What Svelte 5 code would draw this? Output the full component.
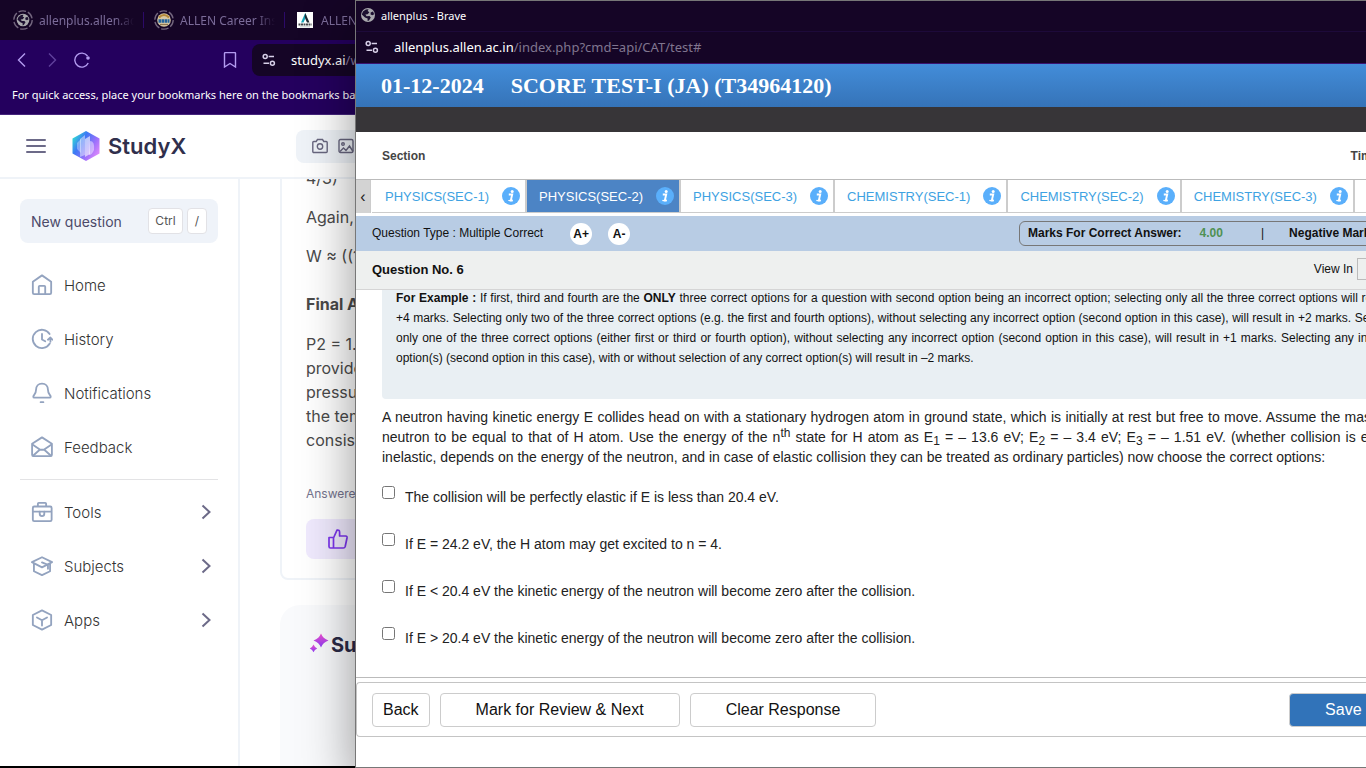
<script lang="ts">
  const browserTabs = [
    { icon: 'globe', title: 'allenplus.allen.ac.in' },
    { icon: 'seal', title: 'ALLEN Career Institute' },
    { icon: 'allen', title: 'ALLEN Digital' }
  ];

  const mainNav = [
    { icon: 'home', label: 'Home' },
    { icon: 'history', label: 'History' },
    { icon: 'bell', label: 'Notifications' },
    { icon: 'mail', label: 'Feedback' }
  ];

  const moreNav = [
    { icon: 'tools', label: 'Tools' },
    { icon: 'subjects', label: 'Subjects' },
    { icon: 'apps', label: 'Apps' }
  ];

  const sections = [
    'PHYSICS(SEC-1)',
    'PHYSICS(SEC-2)',
    'PHYSICS(SEC-3)',
    'CHEMISTRY(SEC-1)',
    'CHEMISTRY(SEC-2)',
    'CHEMISTRY(SEC-3)',
    'MATHS(SEC-1)'
  ];

  const options = [
    'The collision will be perfectly elastic if E is less than 20.4 eV.',
    'If E = 24.2 eV, the H atom may get excited to n = 4.',
    'If E < 20.4 eV the kinetic energy of the neutron will become zero after the collision.',
    'If E > 20.4 eV the kinetic energy of the neutron will become zero after the collision.'
  ];

  let activeSection = $state('PHYSICS(SEC-2)');
  let checked = $state([false, false, false, false]);

  function clearResponse() {
    checked = options.map(() => false);
  }
</script>

{#snippet globe()}
  <circle cx="8" cy="8" r="7" fill="#a9a9ad" />
  <path d="M3 4.6 5.8 2.4 8.6 2.2 7.6 4 9.4 5.2 7.6 7.2 5.4 7.4 6.6 9.2 9.6 9 10.8 10.6 9 13.4 7.6 14 7.6 11.6 5 10.4 1.8 7.4Z" fill="#1c1030" />
  <path d="M10.6 5.6 13 4.4 14.2 7.2 12.4 8.2 10.6 7.4Z" fill="#1c1030" />
{/snippet}

{#snippet tuneIcon()}
  <svg class="tune" viewBox="0 0 14 14" fill="none" stroke="currentColor" stroke-width="1.5">
    <circle cx="3.2" cy="3.6" r="2" />
    <path d="M6.6 3.6H12M1.5 10.2H7" />
    <circle cx="10.4" cy="10.2" r="2" />
  </svg>
{/snippet}

{#snippet navIcon(name: string)}
  <svg class="nav-icon" viewBox="0 0 24 24" fill="none" stroke="currentColor" stroke-width="2" stroke-linejoin="round" stroke-linecap="round">
    {#if name === 'home'}
      <path d="M2 8.500 12 1.500l10 7V20.500a1.500 1.500 0 0 1-1.500 1.500h-17a1.500 1.500 0 0 1-1.500-1.500Z" />
      <path d="M8.500 22v-8a1 1 0 0 1 1-1h5a1 1 0 0 1 1 1v8" />
    {:else if name === 'history'}
      <path d="M20.300 6.500A10 10 0 1 0 20.500 17" />
      <path d="M12 6.500V12.500L15.500 14.500" />
      <path d="M18.500 12.800 21.200 10.400 23.500 12.800M21.200 10.800V15" />
    {:else if name === 'bell'}
      <path d="M12 1.800c-4 0-6.500 3-6.500 6.700 0 5-3 5.500-3 7.500 0 .8.600 1 1.200 1h16.600c.6 0 1.200-.2 1.200-1 0-2-3-2.500-3-7.500 0-3.700-2.500-6.700-6.500-6.700ZM10.500 22h3" />
    {:else if name === 'mail'}
      <path d="M1.200 8.500 12 1.500 22.800 8.500v12a1.500 1.500 0 0 1-1.500 1.500H2.700a1.500 1.500 0 0 1-1.500-1.500Z" />
      <path d="M2 9.500 10 15h4l8-5.500M2.200 21.500 9.500 15M21.800 21.500 14.500 15" />
    {:else if name === 'tools'}
      <path d="M3.500 6h17.500a1.500 1.500 0 0 1 1.500 1.500v13a1.500 1.500 0 0 1-1.500 1.500h-17.500A1.500 1.500 0 0 1 2 20.500v-13A1.500 1.500 0 0 1 3.500 6ZM7.500 5.500V3a1 1 0 0 1 1-1h7a1 1 0 0 1 1 1v2.500M2 11.500h20" />
      <path d="M9.500 11.500v2.500a2.500 2.500 0 0 0 5 0v-2.500" />
    {:else if name === 'subjects'}
      <path d="M1 7.800 12 2.500l11 5.300L12 13.500ZM3.200 9.500v8.200L12 22l8.800-4.300V9.500M12 8l6.500 2.800V15" />
    {:else}
      <path d="M12 1.500 22 6.500v11L12 22.500 2 17.500v-11ZM6.500 9.200 12 12.200l5.500-3M12 12.200V18" />
    {/if}
  </svg>
{/snippet}

<div class="desktop">
  <div class="browser">
    <div class="tab-strip">
      {#each browserTabs as tab}
        <div class="browser-tab">
          {#if tab.icon === 'allen'}
            <svg class="site-icon" viewBox="0 0 16 16">
              <rect width="16" height="16" fill="#fff" />
              <path d="M8.200 1 4 10.500H6.500L9.500 4Z" fill="#18a5ba" />
              <path d="M8.200 1 12.500 10.500H10L7.600 5Z" fill="#202a33" />
              <path d="M1.500 12.500h13" stroke="#44484c" stroke-width="2" stroke-dasharray="2 .5" />
              <path d="M3 14.800h10" stroke="#b6bec3" stroke-width=".8" />
            </svg>
          {:else}
            <svg class="ring-icon" viewBox="0 0 20 20">
              <circle cx="10" cy="10" r="9.200" fill="none" stroke="#74677f" stroke-width="1.300" stroke-dasharray="7.600 2.030" />
              {#if tab.icon === 'globe'}
                <g transform="translate(2.800 2.800) scale(.9)">{@render globe()}</g>
              {:else}
                <circle cx="10" cy="10" r="6.800" fill="#d7c9a4" />
                <path d="M5 7.500Q10 2.500 15 7.500" fill="none" stroke="#b58a39" stroke-width="2" />
                <path d="M4.500 11h11" stroke="#22639d" stroke-width="3.500" stroke-dasharray="2.500 .5" />
                <path d="M6 14.500h8" stroke="#8e7650" stroke-width="1.200" />
              {/if}
            </svg>
          {/if}
          <span class="tab-title">{tab.title}</span>
        </div>
      {/each}
    </div>

    <div class="toolbar">
      <button class="tool" aria-label="Back">
        <svg viewBox="0 0 16 16"><path d="M11 1.500 4.500 8l6.500 6.500" /></svg>
      </button>
      <button class="tool dim" aria-label="Forward">
        <svg viewBox="0 0 16 16"><path d="M5 1.500 11.500 8 5 14.500" /></svg>
      </button>
      <button class="tool" aria-label="Reload">
        <svg viewBox="0 0 16 16"><path d="M13.500 4A7 7 0 1 0 14.200 11" /><circle class="dot" cx="14" cy="6" r="1.800" /></svg>
      </button>
      <button class="tool bookmark" aria-label="Bookmark">
        <svg viewBox="0 0 16 16"><path d="M2.500 1.500a1 1 0 0 1 1-1h9a1 1 0 0 1 1 1V15L8 11.500 2.500 15Z" /></svg>
      </button>
      <div class="address">
        {@render tuneIcon()}
        <span><b>studyx.ai</b>/webapp</span>
      </div>
    </div>
    <div class="bookmarks">For quick access, place your bookmarks here on the bookmarks bar.</div>

    <div class="studyx">
      <header class="site-header">
        <button class="menu" aria-label="Menu"><i></i><i></i><i></i></button>
        <div class="logo">
          <svg viewBox="0 0 28 30">
            <defs>
              <linearGradient id="hex" x1="0" y1=".1" x2="1" y2=".8">
                <stop offset="0" stop-color="#2ff0cd" />
                <stop offset=".35" stop-color="#3d78f5" />
                <stop offset=".7" stop-color="#a071fb" />
                <stop offset="1" stop-color="#e58cfb" />
              </linearGradient>
            </defs>
            <path d="M14 0 27.500 7.500v15L14 30 .5 22.500v-15Z" fill="url(#hex)" />
            <path d="M5 12 9 8v14l-4-4Z" fill="#fff" opacity=".35" />
            <path d="M8 8 13 4v20l-5 2Z" fill="#fff" opacity=".45" />
            <path d="M13 8 18 5v18l-5 3Z" fill="#fff" opacity=".6" />
            <path d="M18 10q5 0 4 9-2 5-5 5Z" fill="#fff" opacity=".45" />
          </svg>
          <span>StudyX</span>
        </div>
        <div class="search">
          <svg viewBox="0 0 16 16"><path d="M1.800 3.500h2.400L5.500 1.500h5l1.300 2h2.400a1 1 0 0 1 1 1v9a1 1 0 0 1-1 1H1.800a1 1 0 0 1-1-1v-9a1 1 0 0 1 1-1Z" /><circle cx="8" cy="8.500" r="2.700" /></svg>
          <svg viewBox="0 0 16 16"><rect x="1" y="1.500" width="14" height="13" rx="1.500" /><circle cx="5" cy="6" r="1.300" /><path d="m2 13.500 3.500-3.500 2.500 2.500 3.500-4.500 3.500 5.500" /></svg>
        </div>
      </header>

      <div class="site-body">
        <aside class="sidebar">
          <button class="new-question">
            <span>New question</span>
            <kbd>Ctrl</kbd>
            <kbd>/</kbd>
          </button>
          <nav>
            {#each mainNav as item}
              <a href="#top">{@render navIcon(item.icon)}{item.label}</a>
            {/each}
            <hr />
            {#each moreNav as item}
              <a href="#top">
                {@render navIcon(item.icon)}{item.label}
                <svg class="chevron" viewBox="0 0 10 16"><path d="M1.500 1.500 8.500 8l-7 6.500" /></svg>
              </a>
            {/each}
          </nav>
        </aside>

        <main class="feed">
          <article class="answer">
            <p>4/3)</p>
            <p>Again, using</p>
            <p>W ≈ ((1.2</p>
            <h4>Final Answer:</h4>
            <p class="last">
              P2 = 1.2 atm<br />
              provided<br />
              pressure<br />
              the temperature<br />
              consistent
            </p>
            <small>Answered by</small>
            <button class="like" aria-label="Like">
              <svg viewBox="0 0 20 20"><path d="M1 8.500h4.500V19H2.500A1.500 1.500 0 0 1 1 17.500ZM5.500 9 9 1.200q2.600-.6 2.600 2.300V7h6q1.700.2 1.400 2l-1.800 8.500q-.4 1.500-1.800 1.500H5.500" /></svg>
            </button>
          </article>
          <section class="suggested">
            <svg viewBox="0 0 20 20">
              <defs>
                <linearGradient id="spark" x1="0" y1="0" x2="0" y2="1">
                  <stop offset="0" stop-color="#f04fd0" />
                  <stop offset="1" stop-color="#8b3cf7" />
                </linearGradient>
              </defs>
              <path d="M12 .5q1.800 4.800 7.500 7-5.700 2.200-7.500 7-1.800-4.800-7.500-7 5.700-2.200 7.500-7Z" fill="url(#spark)" />
              <path d="M4.500 11.500q1 2.700 3.700 3.900-2.700 1.200-3.700 3.900-1-2.700-3.700-3.900 2.700-1.200 3.700-3.900Z" fill="url(#spark)" />
            </svg>
            <h3>Suggested</h3>
          </section>
        </main>
      </div>
    </div>
  </div>

  <div class="popup">
    <div class="popup-title">
      <svg viewBox="0 0 16 16">{@render globe()}</svg>
      allenplus - Brave
    </div>
    <div class="popup-url">
      {@render tuneIcon()}
      <span><b>allenplus.allen.ac.in</b>/index.php?cmd=api/CAT/test#</span>
    </div>
    <h1 class="test-name"><span>01-12-2024</span><span>SCORE TEST-I (JA) (T34964120)</span></h1>
    <div class="dark-bar"></div>
    <div class="section-row">
      <span>Section</span>
      <span class="time">Time Left :</span>
    </div>

    <div class="section-tabs">
      <button class="scroll-left" aria-label="Scroll left">‹</button>
      {#each sections as section}
        <button class="section-tab" class:active={section === activeSection} onclick={() => (activeSection = section)}>
          {section}
          <svg viewBox="0 0 18 18">
            <circle cx="9" cy="9" r="9" fill="#5aaffb" />
            <circle cx="10.200" cy="4.600" r="1.500" fill="#fff" />
            <path d="M6.800 7.500h3.400L8.800 13.500h1.800" fill="none" stroke="#fff" stroke-width="1.900" />
            <path d="M6.300 13.500h4.500" stroke="#fff" stroke-width="1.200" />
          </svg>
        </button>
      {/each}
    </div>

    <div class="type-bar">
      <span>Question Type : Multiple Correct</span>
      <button class="zoom">A+</button>
      <button class="zoom">A-</button>
      <div class="marks">
        <b>Marks For Correct Answer:</b>
        <b class="plus">4.00</b>
        <span class="bar">|</span>
        <b>Negative Marks: 2.00</b>
      </div>
    </div>

    <div class="number-bar">
      <b>Question No. 6</b>
      <label for="language">View In</label>
      <select id="language"><option></option><option>English</option></select>
    </div>

    <div class="question">
      <div class="instructions">
        <b>For Example :</b> If first, third and fourth are the <b>ONLY</b> three correct options for a question with second option being an incorrect option; selecting only all the three correct options will result in +4&nbsp;marks. Selecting only two of the three correct options (e.g. the first and fourth options), without selecting any incorrect option (second option in this case), will result in +2 marks. Selecting only one of the three correct options (either first or third or fourth option), without selecting any incorrect option (second option in this case), will result in +1 marks. Selecting any incorrect option(s) (second option in this case), with or without selection of any correct option(s) will result in –2 marks.
      </div>
      <p class="statement">
        A neutron having kinetic energy E collides head on with a stationary hydrogen atom in ground state, which is initially at rest but free to move. Assume the mass of the neutron to be equal to that of H atom. Use the energy of the n<sup>th</sup> state for H atom as E<sub>1</sub> = – 13.6 eV; E<sub>2</sub> = – 3.4 eV; E<sub>3</sub> = – 1.51 eV. (whether collision is elastic or inelastic, depends on the energy of the neutron, and in case of elastic collision they can be treated as ordinary particles) now choose the correct options:
      </p>
      {#each options as option, i}
        <label class="option">
          <input type="checkbox" bind:checked={checked[i]} />
          <span>{option}</span>
        </label>
      {/each}
    </div>

    <footer class="actions">
      <button>Back</button>
      <button class="wide">Mark for Review &amp; Next</button>
      <button class="wide clear" onclick={clearResponse}>Clear Response</button>
      <button class="wide save">Save &amp; Next</button>
    </footer>
  </div>
</div>

<style>
  :global(body) {
    background: #000;
  }

  .desktop {
    position: relative;
    height: 100vh;
    overflow: hidden;
    font-family: Inter, sans-serif;
  }

  .desktop * {
    box-sizing: border-box;
  }

  button {
    font: inherit;
    color: inherit;
    padding: 0;
    border: 0;
    background: none;
    cursor: pointer;
  }

  /* main browser window */
  .browser {
    display: flex;
    flex-direction: column;
    height: calc(100vh - 2px);
    overflow: hidden;
    white-space: nowrap;
  }

  .tab-strip {
    flex: none;
    display: flex;
    height: 40px;
    padding-left: 3px;
    background: #150526;
  }

  .browser-tab {
    position: relative;
    display: flex;
    align-items: center;
    gap: 6px;
    width: 141px;
    padding: 0 10px;
    color: #7b6c99;
    font-family: 'Noto Sans', sans-serif;
    font-size: 12px;
  }

  .browser-tab::after {
    content: '';
    position: absolute;
    right: 0;
    height: 16px;
    border-right: 1px solid #2c0a68;
  }

  .ring-icon {
    flex: none;
    width: 20px;
    height: 20px;
  }

  .site-icon {
    flex: none;
    width: 16px;
    height: 16px;
    margin: 0 2px;
  }

  .tab-title {
    overflow: hidden;
    mask-image: linear-gradient(90deg, #000 80%, transparent);
  }

  .toolbar {
    flex: none;
    display: flex;
    align-items: center;
    gap: 14px;
    height: 40px;
    padding-left: 14px;
    background: #24005e;
  }

  .tool {
    width: 16px;
    height: 16px;
    color: #b39bf0;
  }

  .tool svg {
    display: block;
    width: 16px;
    height: 16px;
    fill: none;
    stroke: currentColor;
    stroke-width: 1.4;
  }

  .tool .dot {
    fill: currentColor;
    stroke: none;
  }

  .tool.dim {
    color: #60409c;
  }

  .bookmark {
    margin-left: 118px;
  }

  .address {
    flex: 1;
    display: flex;
    align-items: center;
    gap: 15px;
    height: 32px;
    padding-left: 10px;
    border-radius: 8px;
    background: #150526;
    color: #8779a0;
    font-family: 'Noto Sans', sans-serif;
    font-size: 13px;
  }

  .tune {
    width: 14px;
    height: 14px;
    color: #d8d0e8;
  }

  .address b,
  .popup-url b {
    color: #fff;
    font-weight: 400;
  }

  .bookmarks {
    flex: none;
    height: 35px;
    padding-left: 12px;
    border-bottom: 1px solid #45257c;
    background: #24005e;
    color: #fff;
    font-family: 'Noto Sans', sans-serif;
    font-size: 11px;
    line-height: 30px;
  }

  .studyx {
    flex: 1;
    display: flex;
    flex-direction: column;
    min-height: 0;
    background: #fff;
  }

  .site-header {
    flex: none;
    display: flex;
    align-items: center;
    height: 64px;
    padding-left: 26px;
    border-bottom: 2px solid #eff3f8;
  }

  .menu {
    display: flex;
    flex-direction: column;
    gap: 4px;
    width: 20px;
  }

  .menu i {
    height: 2px;
    border-radius: 1px;
    background: #6c6a88;
  }

  .logo {
    display: flex;
    align-items: center;
    gap: 8px;
    width: 224px;
    margin-left: 26px;
    color: #302f4c;
    font-size: 22px;
    font-weight: 600;
  }

  .logo svg {
    width: 28px;
    height: 30px;
  }

  .search {
    flex: 1;
    display: flex;
    align-items: center;
    gap: 10px;
    height: 33px;
    padding-left: 16px;
    border-radius: 8px;
    background: #eff3f8;
  }

  .search svg {
    width: 16px;
    height: 16px;
    fill: none;
    stroke: #68667f;
    stroke-width: 1.4;
  }

  .site-body {
    flex: 1;
    display: flex;
    min-height: 0;
    overflow: hidden;
  }

  .sidebar {
    flex: none;
    width: 240px;
    padding: 20px 20px 0;
    border-right: 2px solid #eff3f8;
  }

  .new-question {
    display: flex;
    align-items: center;
    gap: 4px;
    width: 100%;
    height: 44px;
    padding: 0 11px;
    border-radius: 8px;
    background: #eff3f9;
    color: #4c4a69;
    font-size: 14px;
  }

  .new-question span {
    flex: 1;
    text-align: left;
  }

  kbd {
    height: 26px;
    padding: 0 6px;
    border: 1px solid #e2e2e6;
    border-radius: 4px;
    background: #fff;
    color: #555;
    font-family: inherit;
    font-size: 12px;
    line-height: 24px;
  }

  kbd:last-child {
    padding: 0 7px;
  }

  nav {
    margin-top: 15px;
  }

  nav a {
    display: flex;
    align-items: center;
    gap: 11px;
    height: 54px;
    padding: 0 7px 0 11px;
    color: #333;
    font-size: 15px;
    font-weight: 300;
    text-decoration: none;
  }

  .nav-icon {
    width: 22px;
    height: 22px;
    color: #93a3bf;
  }

  .chevron {
    width: 10px;
    height: 16px;
    margin-left: auto;
    fill: none;
    stroke: #6c6a88;
    stroke-width: 2;
  }

  hr {
    height: 1px;
    margin: 5px 0;
    border: 0;
    background: #e3e3e5;
  }

  .feed {
    flex: 1;
    display: flex;
    flex-direction: column;
    gap: 25px;
    padding: 0 40px;
    overflow: hidden;
    color: #4a4a4a;
    font-size: 16px;
    line-height: 24px;
  }

  /* the feed is scrolled part way through the answer */
  .answer {
    margin-top: -40px;
    padding: 25px 24px 19px;
    border: 2px solid #eff3f8;
    border-radius: 8px;
  }

  .answer p {
    margin: 0 0 15px;
  }

  .answer h4 {
    margin: 24px 0 16px;
    font-size: 16px;
    font-weight: 700;
  }

  .answer .last {
    margin-bottom: 32px;
  }

  .answer small {
    display: block;
    margin-bottom: 15px;
    color: #75748e;
    font-size: 12px;
    line-height: 20px;
  }

  .like {
    display: block;
    width: 64px;
    height: 40px;
    padding-left: 22px;
    border-radius: 8px;
    background: #f0eafe;
  }

  .like svg {
    display: block;
    width: 20px;
    height: 20px;
    fill: none;
    stroke: #7c35ee;
    stroke-width: 1.7;
    stroke-linejoin: round;
  }

  .suggested {
    flex: 1;
    display: flex;
    align-items: flex-start;
    gap: 2px;
    padding: 28px 29px;
    border-radius: 20px 20px 0 0;
    background: #f9fafc;
    color: #2b2a46;
  }

  .suggested svg {
    width: 20px;
    height: 20px;
  }

  .suggested h3 {
    margin: 0;
    font-size: 20px;
    line-height: 24px;
  }

  /* test window, dragged partly off the right edge of the screen */
  .popup {
    position: absolute;
    top: 0;
    right: -85px;
    bottom: 0;
    left: 355px;
    display: flex;
    flex-direction: column;
    border: 1px solid #777;
    background: #fff;
    box-shadow: 0 20px 50px rgb(0 0 0 / 42%);
    color: #111;
    font-family: 'Liberation Sans', Arial, sans-serif;
    font-size: 12px;
    white-space: nowrap;
  }

  .popup > * {
    flex: none;
  }

  .popup-title,
  .popup-url {
    display: flex;
    align-items: center;
    background: #150526;
    color: #fff;
    font-family: 'Noto Sans', sans-serif;
  }

  .popup-title {
    gap: 5px;
    height: 30px;
    padding: 0 0 2px 4px;
    font-size: 11px;
  }

  .popup-title svg {
    width: 16px;
    height: 16px;
  }

  .popup-url {
    gap: 15px;
    height: 33px;
    padding: 0 0 2px 9px;
    border-top: 1px solid #1d0a3a;
    border-bottom: 1px solid #3a1470;
    color: #80768f;
    font-size: 13px;
  }

  .test-name {
    display: flex;
    gap: 27px;
    height: 43px;
    margin: 0;
    padding-left: 25px;
    background: linear-gradient(#438dd9, #3573b8);
    color: #fff;
    font-family: 'Liberation Serif', 'Times New Roman', serif;
    font-size: 22px;
    line-height: 43px;
  }

  .dark-bar {
    height: 25px;
    background: #373538;
  }

  .section-row {
    display: flex;
    justify-content: space-between;
    height: 47px;
    padding: 0 39px 0 26px;
    color: #444;
    font-weight: 700;
    line-height: 49px;
  }

  .section-tabs {
    display: flex;
    height: 37px;
    padding-bottom: 3px;
    border-top: 1px solid #bbb;
    overflow: hidden;
  }

  .scroll-left {
    flex: none;
    width: 15px;
    margin-right: 1px;
    border-right: 1px solid #ccc;
    background: #d3d3d3;
    color: #222;
    font-size: 16px;
  }

  .section-tab {
    flex: none;
    display: flex;
    align-items: center;
    gap: 13px;
    padding: 0 5px 0 13px;
    border-right: 2px solid #ccc;
    border-bottom: 1px solid #ccc;
    color: #3ea2e2;
    font-size: 13px;
  }

  .section-tab + .section-tab {
    padding-left: 12px;
  }

  .section-tab.active {
    background: #4c84c5;
    color: #fff;
  }

  .section-tab svg {
    width: 18px;
    height: 18px;
  }

  .type-bar {
    display: flex;
    align-items: center;
    height: 35px;
    padding: 0 10px 0 16px;
    background: #b8cce4;
  }

  .type-bar > span {
    margin-right: 27px;
    padding-bottom: 2px;
  }

  .zoom {
    width: 22px;
    height: 22px;
    margin-right: 16px;
    border-radius: 50%;
    background: #fff;
    font-weight: 700;
  }

  .marks {
    display: flex;
    align-items: center;
    width: 421px;
    height: 25px;
    margin-left: auto;
    padding: 0 0 2px 8px;
    border: 1px solid #777;
    border-radius: 6px;
  }

  .plus {
    margin: 0 38px 0 18px;
    color: #4f9153;
  }

  .bar {
    margin-right: 25px;
  }

  .number-bar {
    display: flex;
    align-items: center;
    height: 39px;
    padding: 0 16px 2px;
    border-bottom: 1px solid #d5d5d5;
    background: #eef0ef;
  }

  .number-bar b {
    flex: 1;
    font-size: 13px;
  }

  .number-bar select {
    width: 77px;
    height: 22px;
    margin-left: 4px;
    border: 1px solid #bbb;
    background: transparent;
  }

  .popup .question {
    flex: 1;
    min-height: 0;
    padding: 0 32px 0 26px;
    overflow: hidden;
    border-bottom: 1px solid #bbb;
    white-space: normal;
  }

  /* scrolled to the end of the instructions */
  .instructions {
    margin-top: -20px;
    padding: 18px 14px 31px;
    border-radius: 4px;
    background: #e9eff3;
    line-height: 20px;
    text-align: justify;
  }

  .statement {
    margin: 8px 0 19px;
    color: #222;
    font-size: 14px;
    line-height: 20px;
    text-align: justify;
  }

  sup,
  sub {
    font-size: 12px;
    line-height: 0;
  }

  sup {
    vertical-align: 5px;
  }

  sub {
    vertical-align: -3px;
  }

  .option {
    display: flex;
    gap: 10px;
    height: 47px;
    color: #222;
    font-size: 14px;
    line-height: 20px;
  }

  .option input {
    width: 13px;
    height: 13px;
    margin: 0;
  }

  .option span {
    padding-top: 1px;
  }

  .actions {
    display: flex;
    gap: 10px;
    height: 55px;
    margin: 4px 0 30px;
    padding: 10px 0 0 15px;
    border: 1px solid #c4c4c4;
    border-right: 0;
    border-radius: 4px;
    font-size: 16px;
  }

  .actions button {
    height: 34px;
    padding: 0 10px;
    border: 1px solid #ccc;
    border-radius: 4px;
  }

  .actions .wide {
    padding: 0 35px;
  }

  .actions .save {
    margin-left: auto;
    background: #3173b9;
    color: #fff;
  }
</style>
